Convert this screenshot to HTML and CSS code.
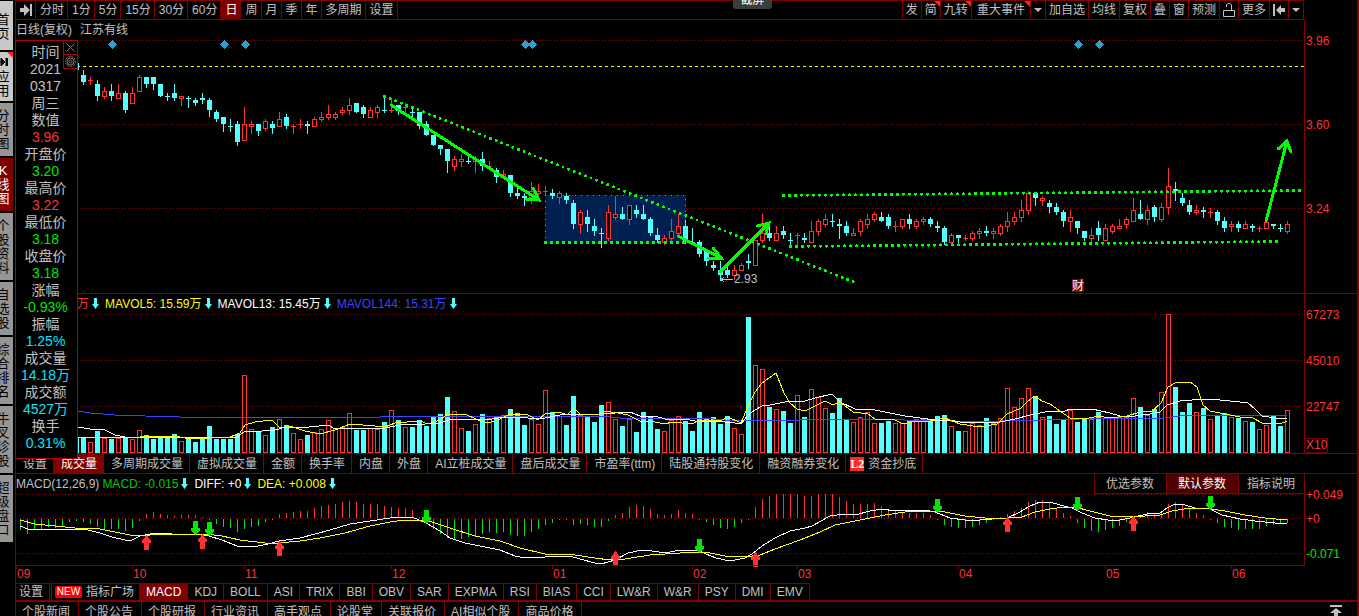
FILE: index.html
```html
<!DOCTYPE html>
<html lang="zh-CN">
<head>
<meta charset="utf-8">
<title>江苏有线 日线</title>
<link rel="stylesheet" href="styles.css">
</head>
<body>
<nav class="side">
  <button class="side-tab light"><span>首页</span></button>
  <button class="side-tab light flagged"><svg class="side-icon" viewBox="0 0 10 8"><path d="M0 4h4M3 0l4 4-4 4zM8 0h2v8H8z"/></svg><span>应用</span></button>
  <button class="side-tab"><span>分时图</span></button>
  <button class="side-tab active"><span>K线图</span></button>
  <button class="side-tab"><span>个股资料</span></button>
  <button class="side-tab"><span>自选股</span></button>
  <button class="side-tab"><span>综合排名</span></button>
  <button class="side-tab"><span>牛叉诊股</span></button>
  <button class="side-tab"><span>超级盘口</span></button>
</nav>
<main class="main">
  <header class="toolbar">
    <div class="tools">
      <button aria-label="前进"><svg width="12" height="12" viewBox="0 0 12 12"><path d="M0 4h4V0l6 6-6 6V8H0zM10 0h2v12h-2z"/></svg></button>
      <button>分时</button><button>1分</button><button>5分</button><button>15分</button><button>30分</button><button>60分</button><button class="active">日</button><button>周</button><button>月</button><button>季</button><button>年</button><button>多周期</button><button>设置</button>
    </div>
    <div class="tools tight">
      <button>发</button><button class="flagged">简</button><button class="flagged">九转</button><button class="flagged wide">重大事件</button><button aria-label="展开"><svg width="8" height="4" viewBox="0 0 8 4"><path d="M0 0h8L4 4z"/></svg></button><button>加自选</button><button>均线</button><button>复权</button><button>叠</button><button>窗</button><button>预测</button><button aria-label="锁定"><svg width="12" height="14" viewBox="0 0 12 14"><path class="line" d="M.5 7.500h11v6H.5zM3.500 4V2L5 .5h2L8.500 2v5"/></svg></button><button>更多</button><button aria-label="收起"><svg width="12" height="12" viewBox="0 0 12 12"><path d="M0 0h2v12H0zM3 6l5-5v3h4v4H8v3z"/></svg></button><button aria-label="菜单"><svg width="8" height="4" viewBox="0 0 8 4"><path d="M0 0h8L4 4z"/></svg></button>
    </div>
  </header>

  <section class="pane price">
    <h1 class="title"><span>日线(复权)</span><span>江苏有线</span></h1>
    <svg class="plot" id="price" viewBox="16 40 1288 253" preserveAspectRatio="none">
      <path class="grid" d="M77 40.500H1304M77 124.500H1304M77 208.500H1304"/>
      <path class="level" d="M77 66.500H1304"/>
      <rect class="zone" x="545" y="195" width="141" height="47"/>
      <g id="marks"></g>
      <g id="candles"></g>
      <path class="dots fine" d="M545.500 195.500H685.500V242.500M545.500 195.500V242.500"/>
      <path class="dots" d="M545.500 242.500H685.500M384.500 96.500L854 282M783.500 195.500L1300 190.500M790.500 246.500L1278 241.500"/>
      <path class="arrow" d="M391 105L539 200M533 188L539 200L526 199M678 236L721 258M713 248L721 258L708 258M720 272L769 223M757 226L769 223L766 234M1266 221L1287 141M1278 149L1287 141L1291 152"/>
      <path class="pointer" d="M721 279.500H733M724 277L721 279.500L724 282"/>
      <text class="low" x="734" y="283">2.93</text>
      <rect class="badge" x="1072" y="279" width="12" height="13"/>
      <text class="badge-text" x="1072" y="290">财</text>
    </svg>
    <div class="axis"><span>3.96</span><span>3.60</span><span>3.24</span></div>
  </section>

  <section class="pane volume">
    <div class="legend">
      <span class="red">万<svg class="tick" viewBox="0 0 7 12"><path d="M2 0h3v6h2L3.500 11 0 6h2z"/></svg></span>
      <span class="yellow">MAVOL5: 15.59万<svg class="tick" viewBox="0 0 7 12"><path d="M2 0h3v6h2L3.500 11 0 6h2z"/></svg></span>
      <span class="white">MAVOL13: 15.45万<svg class="tick" viewBox="0 0 7 12"><path d="M2 0h3v6h2L3.500 11 0 6h2z"/></svg></span>
      <span class="blue">MAVOL144: 15.31万<svg class="tick" viewBox="0 0 7 12"><path d="M2 0h3v6h2L3.500 11 0 6h2z"/></svg></span>
    </div>
    <svg class="plot" id="volume" viewBox="16 314 1288 139" preserveAspectRatio="none">
      <path class="grid" d="M77 314.500H1304M77 360.500H1304M77 406.500H1304"/>
      <g id="bars"></g>
      <polyline class="ma blue-line" points="77,411 90,413 115,415 145,416 180,417 380,417 395,416 410,417 550,416 600,416 620,418 700,418 725,420 740,421 860,419 950,421 1000,421 1080,419 1165,418 1180,416 1210,415 1287,415"/>
      <polyline class="ma white-line" points="77,427 90,429 105,430 115,435 125,437 237,437 244,432 262,431 275,430 286,427 300,428 328,425 335,429 350,428 380,429 400,425 425,424 440,423 452,419 485,420 505,417 515,417 540,419 560,415 575,414 600,414 630,412 640,416 655,416 665,419 685,419 700,422 715,421 735,423 741,424 748,415 755,410 762,406 770,405 785,402 805,401 815,398 832,394 840,402 855,409 875,410 890,413 905,416 920,418 935,420 950,420 960,422 1000,422 1015,419 1030,415 1045,412 1065,411 1070,409 1080,410 1092,409 1110,413 1120,416 1135,416 1150,414 1160,412 1167,405 1180,401 1205,399 1220,400 1240,402 1248,403 1255,409 1262,416 1275,418 1280,419 1287,418"/>
      <polyline class="ma yellow-line" points="77,437 100,437 130,438 150,436 175,436 185,438 205,439 215,437 230,437 240,433 245,425 255,422 272,420 280,428 290,426 305,431 320,434 335,430 350,424 375,426 385,427 395,423 420,421 428,424 440,420 448,414 465,414 478,420 488,423 498,420 510,414 528,415 538,420 545,414 560,412 567,415 574,408 580,414 598,415 604,411 618,413 628,415 640,421 655,422 665,424 672,422 692,424 700,420 722,420 728,417 741,423 748,406 755,392 762,383 776,373 784,393 790,403 797,409 805,411 825,401 833,405 840,402 853,412 868,414 875,419 895,420 903,424 915,421 930,421 945,418 960,424 980,427 997,424 1007,414 1021,408 1028,401 1035,396 1042,401 1050,404 1060,411 1070,418 1085,419 1098,416 1110,418 1127,416 1140,412 1152,411 1161,403 1168,387 1175,383 1190,382 1197,387 1203,405 1210,411 1225,414 1240,417 1253,418 1262,423 1275,423 1280,424 1287,421"/>
    </svg>
    <div class="axis"><span>67273</span><span>45010</span><span>22747</span><b class="unit">X10</b></div>
  </section>

  <div class="tabs">
    <button>设置</button><button class="active">成交量</button><button>多周期成交量</button><button>虚拟成交量</button><button>金额</button><button>换手率</button><button>内盘</button><button>外盘</button><button>AI立桩成交量</button><button>盘后成交量</button><button>市盈率(ttm)</button><button>陆股通持股变化</button><button>融资融券变化</button><button class="with-tag"><i class="l2">L2</i>资金抄底</button>
  </div>

  <section class="pane macd">
    <div class="macd-head">
      <div class="legend plain">
        <span>MACD(12,26,9)</span>
        <span class="green">MACD: -0.015<svg class="tick" viewBox="0 0 7 12"><path d="M2 0h3v6h2L3.500 11 0 6h2z"/></svg></span>
        <span class="white">DIFF: +0<svg class="tick" viewBox="0 0 7 12"><path d="M2 0h3v6h2L3.500 11 0 6h2z"/></svg></span>
        <span class="yellow">DEA: +0.008<svg class="tick" viewBox="0 0 7 12"><path d="M2 0h3v6h2L3.500 11 0 6h2z"/></svg></span>
      </div>
      <div class="params"><button>优选参数</button><button class="active">默认参数</button><button>指标说明</button></div>
    </div>
    <svg class="plot" id="macd" viewBox="16 494 1288 89" preserveAspectRatio="none">
      <path class="grid" d="M17 494.500H1304M17 518.500H1304M17 553.500H1304"/>
      <g id="hist"></g>
      <polyline class="ma white-line" points="20,526 28,529 40,529 60,530 75,529 88,530 100,533 112,537 125,540 132,540 140,536 150,534 160,533 172,534 195,534 209,536 222,540 237,546 258,546 268,544 279,541 300,538 315,534 330,530 350,524 370,521 390,518 400,517 412,517 426,523 440,531 450,538 465,543 480,546 500,550 515,556 525,558 545,557 560,556 570,556 580,559 595,563 601,564 615,560 628,553 642,550 652,551 665,553 680,550 697,550 706,554 716,558 730,561 745,558 752,554 762,546 775,538 790,531 805,528 812,526 830,516 845,514 855,515 870,511 882,509 895,511 925,510 935,512 950,518 965,520 980,520 992,519 1007,518 1018,513 1030,506 1040,502 1050,502 1060,505 1072,508 1082,513 1095,518 1108,520 1120,520 1130,518 1147,514 1160,513 1167,508 1175,504 1185,505 1195,508 1210,509 1222,515 1240,519 1255,521 1275,523 1287,523"/>
      <polyline class="ma yellow-line" points="20,520 35,524 55,526 75,528 100,529 120,533 135,536 150,535 175,534 205,534 222,536 240,540 265,543 279,543 300,541 320,538 345,533 370,526 390,522 405,520 425,520 435,523 450,528 475,536 500,541 520,548 545,554 575,555 595,558 610,560 625,559 650,555 680,553 705,552 725,556 745,557 760,555 775,549 800,540 820,532 835,525 850,522 870,518 885,515 905,512 930,511 945,512 965,516 985,518 1007,518 1022,517 1035,512 1050,509 1065,507 1075,507 1090,511 1110,516 1125,517 1145,516 1160,515 1172,511 1190,508 1205,508 1225,511 1245,515 1265,518 1287,520"/>
      <g id="signals"></g>
      <path class="frame" d="M16 565.500H1304"/>
      <g id="months"></g>
    </svg>
    <div class="axis"><span>+0.049</span><span>+0</span><span class="green">-0.071</span></div>
  </section>

  <div class="tabs indicators">
    <button class="set">设置</button><button class="with-tag first"><i class="new">NEW</i>指标广场</button><button class="active">MACD</button><button>KDJ</button><button>BOLL</button><button>ASI</button><button>TRIX</button><button>BBI</button><button>OBV</button><button>SAR</button><button>EXPMA</button><button>RSI</button><button>BIAS</button><button>CCI</button><button>LW&amp;R</button><button>W&amp;R</button><button>PSY</button><button>DMI</button><button>EMV</button>
  </div>

  <footer class="bottom">
    <div class="tabs links"><button>个股新闻</button><button>个股公告</button><button>个股研报</button><button>行业资讯</button><button>高手观点</button><button>论股堂</button><button>关联报价</button><button>AI相似个股</button><button>商品价格</button></div>
    <button class="totop" aria-label="展开面板"><svg width="12" height="13" viewBox="0 0 12 13"><path d="M0 0h12v2H0zM6 3l6 5H8v5H4V8H0z"/></svg></button>
  </footer>

  <aside class="info">
    <div class="info-tools">
      <button aria-label="关闭"><svg viewBox="0 0 13 13"><path d="M2.500 2.500l8 8M10.500 2.500l-8 8"/></svg></button>
      <button aria-label="参数"><svg viewBox="0 0 13 13"><circle cx="6.500" cy="6.500" r="5" stroke-dasharray="2 1"/><circle cx="6.500" cy="6.500" r="3.500"/><circle cx="6.500" cy="6.500" r="1.500"/></svg></button>
    </div>
    <dl>
      <dt>时间</dt><dd class="gray">2021</dd><dd class="gray">0317</dd><dd class="gray">周三</dd>
      <dt>数值</dt><dd class="red">3.96</dd>
      <dt>开盘价</dt><dd class="green">3.20</dd>
      <dt>最高价</dt><dd class="red">3.22</dd>
      <dt>最低价</dt><dd class="green">3.18</dd>
      <dt>收盘价</dt><dd class="green">3.18</dd>
      <dt>涨幅</dt><dd class="green">-0.93%</dd>
      <dt>振幅</dt><dd class="cyan">1.25%</dd>
      <dt>成交量</dt><dd class="cyan">14.18万</dd>
      <dt>成交额</dt><dd class="cyan">4527万</dd>
      <dt>换手</dt><dd class="cyan">0.31%</dd>
    </dl>
  </aside>
  <div class="hint">截屏</div>
</main>
<script src="chart.js"></script>
</body>
</html>
```
FILE: styles.css
```css
* { box-sizing: border-box; }
body {
  margin: 0;
  height: 100vh;
  display: flex;
  gap: 2px;
  overflow: hidden;
  background: #000;
  color: #c0c0c0;
  font: 12px/18px "Liberation Sans", "Noto Sans CJK SC", sans-serif;
}
button {
  margin: 0;
  padding: 0;
  border: 0;
  background: none;
  color: inherit;
  font: inherit;
  white-space: nowrap;
}
.red { color: #ff3232; }
.green { color: #00e600; }
.yellow { color: #ffff00; }
.white { color: #fff; }
.blue { color: #4040ff; }
.cyan { color: #00e6ff; }
.gray { color: #c0c0c0; }

/* side tabs, partly scrolled off the left edge */
.side { flex: none; width: 13px; overflow: hidden; display: flex; flex-direction: column; gap: 2px; padding-top: 1px; }
.side-tab {
  position: relative;
  flex: none;
  width: 14px;
  margin-left: -4px;
  padding: 6px 0 5px;
  background: #969696;
  color: #000;
  font-size: 13px;
  line-height: 14px;
  white-space: normal;
  box-shadow: 4px 0 0 #969696;
  display: flex;
  flex-direction: column;
  align-items: center;
}
.side-tab span { display: block; width: 14px; word-break: break-all; text-align: center; }
.side-tab.light { background: #c8c8c8; box-shadow: 4px 0 0 #c8c8c8; min-height: 49px; justify-content: center; padding: 3px 0 0; }
.side-tab.active { background: #800000; box-shadow: 4px 0 0 #800000; color: #fff; }
.side-icon { width: 10px; height: 8px; margin-bottom: 4px; }
.side-icon path { stroke: #000; }
.side .flagged::after { right: -3px; }

.main { position: relative; flex: 1; min-width: 0; border-left: 1px solid #800000; border-right: 2px solid #800000; display: flex; flex-direction: column; }

.toolbar { flex: none; height: 20px; margin-right: 53px; border-top: 1px solid #800000; border-bottom: 1px solid #800000; display: flex; justify-content: space-between; }
.tools { display: flex; }
.tools button { position: relative; padding: 0 3px 0 4px; border-right: 1px solid #800000; display: flex; align-items: center; }
.tools.tight { border-left: 1px solid #800000; }
.tools.tight button { padding: 0 3px; }
.tools.tight .wide { padding: 0 5px; }
.tools .active { background: #800000; color: #fff; }
.tools svg { fill: #c0c0c0; }
.tools .line { fill: none; stroke: #c0c0c0; }
.flagged::after { content: ""; position: absolute; top: 0; right: 0; border: 3px solid; border-color: #ff2020 #ff2020 transparent transparent; }

.pane { flex: none; display: grid; grid-template-columns: minmax(0, 1fr) 53px; border-bottom: 1px solid #800000; }
.plot { display: block; width: 100%; grid-column: 1; overflow: hidden; shape-rendering: crispEdges; }
.price { grid-template-rows: 20px 253px; }
.price .plot { height: 253px; }
.volume { grid-template-rows: 20px 139px; }
.volume .plot { height: 139px; }
.macd { grid-template-rows: 20px 89px; border-bottom: 0; }
.macd .plot { height: 89px; }
.title { margin: 0; font-size: 12px; line-height: 20px; font-weight: 400; display: flex; gap: 8px; }
.axis { grid-column: 2; grid-row: 1 / 3; border-left: 1px solid #800000; padding: 14px 0 0 1px; display: flex; flex-direction: column; gap: 70px; color: #ff3232; line-height: 14px; }
.volume .axis { gap: 32px; }
.volume .unit { margin-top: -8px; align-self: flex-start; border: 1px solid #800000; border-left: 0; font-weight: 400; line-height: 13px; }
.macd .axis { gap: 10px; margin-bottom: 17px; }
.macd .axis .green { margin-top: 11px; }

.legend { display: flex; gap: 6px; padding-left: 61px; line-height: 20px; white-space: nowrap; }
.legend span { display: flex; align-items: center; gap: 3px; }
.legend.plain { padding-left: 0; }
.legend.plain span:first-child { margin-right: -3px; }
.legend.plain .green { color: #00c800; }
.tick { width: 7px; height: 12px; fill: #54ffff; }

.macd-head { display: flex; justify-content: space-between; }
.params { display: flex; border: 1px solid #800000; border-width: 1px 0 1px 1px; margin-top: -1px; }
.params button { padding: 0 12px 0 11px; border-right: 1px solid #800000; }
.params button:last-child { padding: 0 9px 0 8px; border-right: 0; }
.params .active { background: #500000; color: #fff; }

.tabs { flex: none; height: 20px; display: flex; border-bottom: 1px solid #800000; }
.tabs button { padding: 0 6px 0 7px; border-right: 1px solid #800000; display: flex; align-items: center; gap: 4px; }
.tabs .active { background: #800000; color: #fff; }
.tabs .with-tag { padding: 0 6px 0 4px; }
.tabs i { font-style: normal; color: #fff; line-height: 14px; }
.l2 { width: 14px; background: #ff2828; font-family: "Liberation Serif", serif; font-weight: 700; text-align: center; }
.tabs .new { width: 27px; background: #ff0000; font-size: 10px; line-height: 12px; text-align: center; border-radius: 2px; }
.tabs.indicators { height: 17px; align-self: flex-start; border-top: 1px solid #800000; border-bottom: 0; }
.indicators button { line-height: 16px; padding: 0 6px; }
.indicators .set { padding: 0 6px 0 3px; margin-right: 1px; }
.indicators .first { border-left: 1px solid #800000; padding: 0 5px 0 3px; }

.bottom { flex: 1; min-height: 0; overflow: hidden; border-top: 2px solid #800000; display: flex; justify-content: space-between; align-items: flex-start; padding-right: 15px; }
.tabs.links { border-bottom: 0; }
.links button { padding: 0 8px 0 6px; }
.totop { display: flex; padding-top: 3px; }
.totop svg { fill: #c0c0c0; }

/* floating quote window */
.info { position: absolute; left: -1px; top: 40px; width: 63px; background: #000; border: 1px solid #b40000; padding: 3px 0 6px; }
.info dl { margin: 0; text-align: center; font-size: 14px; line-height: 17px; }
.info dl > * { margin: 0; padding-right: 2px; white-space: nowrap; }
.info-tools { position: absolute; right: -1px; top: -1px; width: 15px; }
.info-tools button { display: block; width: 15px; height: 15px; border: 1px solid #b40000; }
.info-tools button + button { margin-top: -1px; }
.info-tools svg { display: block; width: 13px; height: 13px; fill: none; stroke: #808080; }

.hint { position: absolute; top: -9px; left: 717px; width: 39px; height: 18px; border-radius: 3px; background: #3c3c3c; color: #fff; text-align: center; line-height: 18px; }

/* chart parts */
.grid { fill: none; stroke: #960000; stroke-dasharray: 1 2; }
.level { fill: none; stroke: #ffff00; stroke-dasharray: 3 3; }
.zone { fill: #002050; }
.frame { fill: none; stroke: #800000; }
.dots { fill: none; stroke: #00ff00; stroke-width: 3; stroke-linecap: round; stroke-dasharray: 0 6; }
.dots.fine { stroke-width: 2; }
.arrow { fill: none; stroke: #00ff00; stroke-width: 3; stroke-linecap: round; }
.pointer { fill: none; stroke: #c0c0c0; }
.low { fill: #c0c0c0; font-size: 12px; }
.badge { fill: #800000; }
.badge-text { fill: #fff; font-size: 12px; }
.mark { fill: #2f9fcf; }
.down { fill: #54ffff; }
.wick { fill: #ff3232; }
.up { fill: #000; stroke: #ff3232; }
.ma { fill: none; }
.blue-line { stroke: #4040ff; }
.white-line { stroke: #fff; }
.yellow-line { stroke: #ffff00; }
.hist-up { fill: #ff3232; }
.hist-down { fill: #00e600; }
.month { fill: #ff3232; font-size: 12px; }
```
FILE: chart.js
```js
const NS = "http://www.w3.org/2000/svg";
const STEP = 7;

function add(parent, tag, attrs, text) {
  const el = document.createElementNS(NS, tag);
  for (const k in attrs) el.setAttribute(k, attrs[k]);
  if (text) el.textContent = text;
  document.getElementById(parent).appendChild(el);
}

// direction, high, body top, body bottom, low, volume top
const days = `
d 70 75 82 84 437|u 77 80 81 84 442|d 80 84 96 100 431|u 87 91 96 98 438|d 84 91 96 100 439|u 84 93 98 98 438|d 91 93 110 112 437|u 87 93 103 103 439|u 75 77 91 91 430|d 77 77 84 87 435|d 77 77 84 89 439|d 84 84 96 96 438|d 93 96 97 100 437|d 84 93 98 100 434|u 96 96 98 105 441|d 96 98 99 107 439|d 98 100 103 105 442|d 93 98 100 103 438|d 98 100 110 116 426|d 110 112 119 121 439|d 117 117 124 131 439|d 119 126 127 131 439|d 121 124 142 145 434|u 107 124 140 140 375|u 121 124 126 133 429|d 124 124 131 135 431|u 119 121 128 130 435|d 121 124 128 133 427|u 112 119 126 126 419|d 114 117 126 128 425|u 124 126 127 133 433|u 119 124 125 128 439|d 121 124 126 133 435|u 117 119 126 126 432|u 112 117 119 121 429|u 105 114 117 119 420|u 112 114 117 119 428|u 107 110 112 114 427|u 98 105 110 114 413|d 103 103 112 112 430|d 105 107 114 117 430|u 107 110 117 117 428|u 105 107 112 117 429|d 96 110 111 112 422|u 99 110 111 112 410|d 105 105 111 114 420|u 103 107 108 114 427|d 108 112 113 117 427|d 112 112 126 128 420|d 121 124 135 135 426|d 135 135 145 145 417|d 145 145 149 154 414|d 149 149 161 172 397|u 156 159 166 170 411|u 154 159 161 166 428|d 156 161 162 163 431|u 156 159 161 172 424|d 152 159 166 170 414|u 161 166 167 168 418|d 168 170 177 182 416|u 170 174 176 177 415|d 175 175 193 196 409|d 187 193 196 198 413|d 193 196 198 205 425|u 182 191 197 203 419|u 184 191 193 197 424|u 186 191 192 195 390|d 189 193 196 198 412|u 191 193 197 203 416|d 193 196 200 203 425|d 200 203 224 228 396|u 210 212 224 233 415|d 210 217 224 231 416|d 219 226 231 235 422|d 228 233 234 247 405|u 205 212 238 240 402|u 196 214 217 219 419|d 207 214 219 219 426|u 205 205 219 224 419|d 205 210 214 217 432|d 205 214 219 219 412|d 217 219 233 235 417|d 228 235 240 242 429|u 235 238 242 244 431|u 219 231 238 240 420|u 214 226 233 235 416|d 220 226 242 243 421|d 228 242 243 243 431|d 240 242 254 256 412|d 251 251 261 265 418|d 261 265 268 270 417|d 261 270 275 280 424|d 267 270 275 277 416|u 265 270 275 279 428|u 263 265 270 270 434|d 254 261 263 268 317|u 240 240 265 265 365|u 214 233 240 242 369|d 223 233 238 240 407|u 226 233 240 240 409|d 226 231 235 238 411|d 233 240 241 244 423|u 233 235 236 244 395|d 233 238 240 242 417|u 221 231 242 242 389|u 219 221 231 235 397|u 214 219 224 226 408|d 214 221 222 226 413|d 219 224 226 238 398|d 221 226 233 235 420|u 228 233 235 235 422|u 219 221 231 235 417|u 214 219 224 228 412|u 212 214 219 221 423|d 212 217 221 221 423|d 214 217 226 228 421|u 221 226 227 231 423|u 219 219 226 228 423|d 214 219 224 228 421|u 219 221 226 228 419|u 217 219 221 224 419|d 217 219 224 226 421|d 221 226 228 231 416|d 226 228 242 244 415|u 233 235 242 244 426|d 235 235 238 242 431|u 235 238 239 240 431|u 231 233 238 240 423|u 228 231 233 238 425|d 226 231 233 235 418|u 228 231 233 238 423|u 224 226 233 235 418|u 212 221 226 231 388|u 212 217 221 224 407|u 200 210 217 221 398|u 191 193 210 214 388|d 193 193 198 205 396|u 196 198 200 205 417|d 200 203 207 212 416|d 203 207 212 214 424|d 210 212 221 226 420|u 210 217 221 231 410|d 221 221 228 233 422|d 231 231 238 240 418|u 228 235 238 242 419|d 221 228 235 240 412|u 224 228 240 240 418|u 224 226 231 233 418|u 219 226 228 228 417|u 217 219 224 228 417|u 198 210 221 221 398|d 200 214 219 219 407|u 205 210 219 224 415|d 205 207 217 221 409|u 203 207 219 221 392|u 168 186 207 214 314|d 182 189 191 200 387|d 193 198 203 205 412|d 200 205 212 214 403|u 205 210 212 214 412|d 207 210 212 217 408|u 208 212 213 217 419|d 210 212 221 224 415|d 217 221 228 231 413|u 221 224 226 231 417|d 221 224 228 231 418|u 221 224 228 228 421|d 224 226 228 231 422|u 226 228 229 231 429|u 218 222 228 228 425|d 224 224 226 228 416|d 224 228 229 231 426|u 221 224 231 233 410
`.trim().split("|").map(s => s.split(" "));

add("candles", "rect", { class: "down", x: 77, y: 63, width: 2, height: 7 });
add("bars", "rect", { class: "down", x: 77, y: 437, width: 2, height: 16 });

days.forEach((row, i) => {
  const dir = row[0];
  const [high, top, bottom, low, vol] = row.slice(1).map(Number);
  const x = 83 + i * STEP;
  add("candles", "rect", { class: dir === "d" ? "down" : "wick", x, y: high, width: 1, height: low - high + 1 });
  if (dir === "d") {
    add("candles", "rect", { class: "down", x: x - 2, y: top, width: 5, height: Math.max(1, bottom - top) });
    add("bars", "rect", { class: "down", x: x - 2, y: vol, width: 5, height: 453 - vol });
  } else {
    if (bottom - top < 2) add("candles", "rect", { class: "wick", x: x - 2, y: top, width: 5, height: 1 });
    else add("candles", "rect", { class: "up", x: x - 1.5, y: top + 0.5, width: 4, height: bottom - top });
    add("bars", "rect", { class: "up", x: x - 1.5, y: vol + 0.5, width: 4, height: 452 - vol });
  }
});

[112, 224, 245, 525, 532, 1078, 1099].forEach(x =>
  add("marks", "path", { class: "mark", d: `M${x + 0.5} 40l4.500 4.500-4.500 4.500-4.500-4.500z` }));

// histogram heights, positive values hang below zero
const hist = [11,15,11,10,8,9,8,3,2,3,5,8,10,10,10,12,9,2,-4,-6,-4,-3,-2,-3,-3,-3,-1,1,5,8,9,13,10,8,7,3,1,-4,-5,-6,-7,-7,-10,-12,-13,-14,-16,-17,-16,-14,-14,-14,-12,-11,-10,-10,-8,-1,2,10,15,19,20,20,18,17,15,13,14,13,16,17,17,13,10,6,4,1,1,6,5,6,8,8,2,-3,-5,-11,-13,-12,-9,-4,-3,-4,-8,-5,-4,1,3,6,9,10,8,4,1,-11,-19,-22,-25,-25,-24,-24,-22,-22,-24,-25,-24,-21,-17,-14,-14,-14,-15,-12,-8,-8,-6,-5,-5,-5,-3,1,6,8,9,9,8,6,4,1,-1,-4,-7,-10,-16,-18,-18,-15,-10,-5,-2,4,9,12,13,11,9,7,3,-1,-2,-6,-4,-5,-14,-16,-14,-9,-5,-3,1,4,8,9,11,10,10,10,7,6,5,4];
hist.forEach((v, i) => add("hist", "rect", {
  class: v < 0 ? "hist-up" : "hist-down",
  x: 20 + i * STEP, y: v < 0 ? 518 + v : 519, width: 1, height: Math.abs(v)
}));

[[195, 521], [209, 522], [426, 510], [699, 539], [937, 499], [1077, 497], [1210, 496]].forEach(([x, y]) =>
  add("signals", "path", { class: "hist-down", d: `M${x - 2} ${y}h5v7h2v2l-4.500 5-4.500-5v-2h2z` }));
[[146, 535], [202, 534], [279, 541], [615, 551], [755, 552], [1007, 517], [1133, 516]].forEach(([x, y]) =>
  add("signals", "path", { class: "hist-up", d: `M${x + 0.5} ${y}l4.500 6v2h-2v7h-5v-7h-2v-2z` }));

[[16, "09"], [132, "10"], [244, "11"], [391, "12"], [552, "01"], [692, "02"], [797, "03"], [958, "04"], [1105, "05"], [1231, "06"]].forEach(([x, name]) => {
  add("months", "path", { class: "frame", d: `M${x + 0.5} 565v4` });
  add("months", "text", { class: "month", x: x + 1, y: 578 }, name);
});
```
